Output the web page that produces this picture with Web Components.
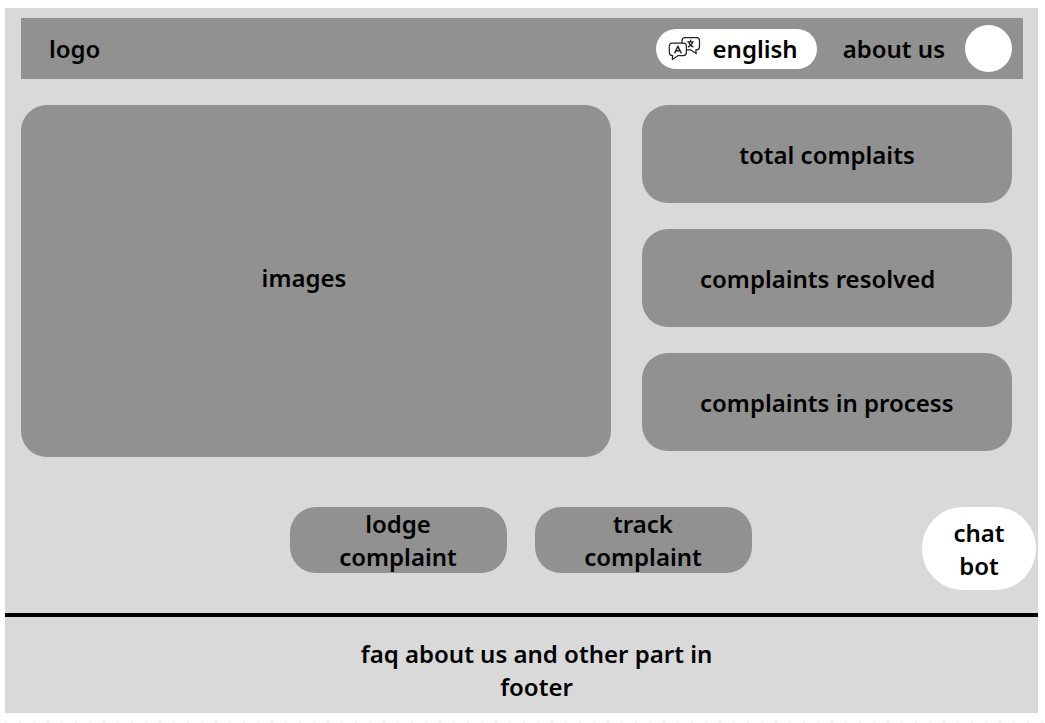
<!DOCTYPE html>
<html lang="en">
<head>
<meta charset="utf-8">
<meta name="viewport" content="width=device-width, initial-scale=1">
<title>Complaints portal</title>
<style>
  body {
    margin: 0;
    background: #fff;
    color: #000;
    font: 600 24px/33px "Noto Sans", "Open Sans", sans-serif;
    --page: #d9d9d9;
    --block: #919191;
  }
</style>
</head>
<body>
<portal-page></portal-page>

<template id="portal-page">
  <style>
    :host {
      display: flex; flex-direction: column; box-sizing: border-box; min-height: 100vh; padding: 8px 7px 10px 5px;
      background: radial-gradient(circle at 2px 2px, #eee 1px, transparent 2px) 4px 100% / 14px 2px repeat-x;
    }
    .frame { flex: 1; display: flex; flex-direction: column; background: var(--page); padding-top: 10px; }
    site-header { margin: 0 15px 0 16px; }
    main { display: flex; flex-direction: column; gap: 50px; padding-top: 26px; }
    .overview { display: grid; grid-template-columns: 59fr 37fr; gap: 31px; margin: 0 26px 0 16px; }
    .stats { display: grid; gap: 26px; align-content: start; }
    .actions { display: grid; grid-template-columns: 1fr auto 1fr; align-items: start; padding: 0 2px 23px 0; }
    .pair { grid-column: 2; display: flex; gap: 28px; }
    chat-button { justify-self: end; }
    site-footer { flex: 1; }
  </style>
  <div class="frame">
    <site-header></site-header>
    <main>
      <section class="overview">
        <image-panel>images</image-panel>
        <div class="stats">
          <stat-card>total complaits</stat-card>
          <stat-card align="start">complaints resolved</stat-card>
          <stat-card align="start">complaints in process</stat-card>
        </div>
      </section>
      <section class="actions">
        <div class="pair">
          <action-button>lodge complaint</action-button>
          <action-button>track complaint</action-button>
        </div>
        <chat-button>chat bot</chat-button>
      </section>
    </main>
    <site-footer>faq about us and other part in footer</site-footer>
  </div>
</template>

<template id="site-header">
  <style>
    :host { display: block; }
    header { display: flex; align-items: center; min-height: 61px; padding: 0 11px 0 28px; background: var(--block); }
    .logo { margin-right: auto; }
    a { color: inherit; text-decoration: none; margin: 0 20px 0 26px; }
    .profile { width: 47px; height: 47px; padding: 0; border: 0; border-radius: 50%; background: #fff; }
  </style>
  <header>
    <span class="logo">logo</span>
    <language-button>english</language-button>
    <a href="#about">about us</a>
    <button class="profile" type="button" aria-label="profile"></button>
  </header>
</template>

<template id="language-button">
  <style>
    :host { display: block; }
    button { display: flex; align-items: center; gap: 12px; height: 40px; padding: 0 19px 0 12px; border: 0; border-radius: 20px; background: #fff; color: inherit; font: inherit; }
    svg { display: block; }
  </style>
  <button type="button">
    <svg width="33" height="25" viewBox="0 0 33 25" fill="none" stroke="#222" stroke-width="1.2" stroke-linecap="round" stroke-linejoin="round" aria-hidden="true">
      <path d="M14 7V4.6Q14 1.6 17 1.6H28.5Q31.5 1.6 31.5 4.6V10.8Q31.5 13.8 28.5 13.8H27.8L28.2 17.6L22.4 13.8H18.6"/>
      <path d="M4.3 7.2H15.4Q18.4 7.2 18.4 10.2V16.6Q18.4 19.6 15.4 19.6H10.2L4.3 23.4L4.7 19.6H4.3Q1.3 19.6 1.3 16.6V10.2Q1.3 7.2 4.3 7.2Z"/>
      <path stroke-width="1.5" d="M6.8 16.8L9.9 10.2L13 16.8M7.9 14.8H11.9"/>
      <path d="M19.8 5.9H25.4M22.6 4.2V5.9M20.4 10.9C22.7 9.8 24.1 8.2 24.5 5.9M20.8 5.9C21.2 8.2 22.6 9.8 25 10.9"/>
    </svg>
    <slot></slot>
  </button>
</template>

<template id="image-panel">
  <style>
    :host { display: grid; place-items: center; box-sizing: border-box; min-height: 352px; padding: 0 24px 8px 0; border-radius: 26px; background: var(--block); }
  </style>
  <slot></slot>
</template>

<template id="stat-card">
  <style>
    :host { display: flex; align-items: center; justify-content: center; box-sizing: border-box; min-height: 98px; border-radius: 26px; background: var(--block); }
    :host([align="start"]) { justify-content: flex-start; padding-left: 58px; }
  </style>
  <slot></slot>
</template>

<template id="action-button">
  <style>
    :host { display: block; }
    button { display: block; width: 217px; min-height: 66px; padding: 0 40px; border: 0; border-radius: 26px; background: var(--block); color: inherit; font: inherit; }
  </style>
  <button type="button"><slot></slot></button>
</template>

<template id="chat-button">
  <style>
    :host { display: block; }
    button { display: block; width: 114px; min-height: 83px; padding: 0 28px; border: 0; border-radius: 41px; background: #fff; color: inherit; font: inherit; }
  </style>
  <button type="button"><slot></slot></button>
</template>

<template id="site-footer">
  <style>
    :host { display: block; }
    footer { border-top: 4px solid #000; padding: 20px 0 8px 30px; text-align: center; }
    p { max-width: 380px; margin: 0 auto; }
  </style>
  <footer><p><slot></slot></p></footer>
</template>

<script>
  class TemplateElement extends HTMLElement {
    constructor() {
      super();
      const template = document.getElementById(this.localName);
      this.attachShadow({ mode: "open" }).append(template.content.cloneNode(true));
    }
  }
  for (const name of ["language-button", "site-header", "image-panel", "stat-card", "action-button", "chat-button", "site-footer", "portal-page"]) {
    customElements.define(name, class extends TemplateElement {});
  }
</script>
</body>
</html>
